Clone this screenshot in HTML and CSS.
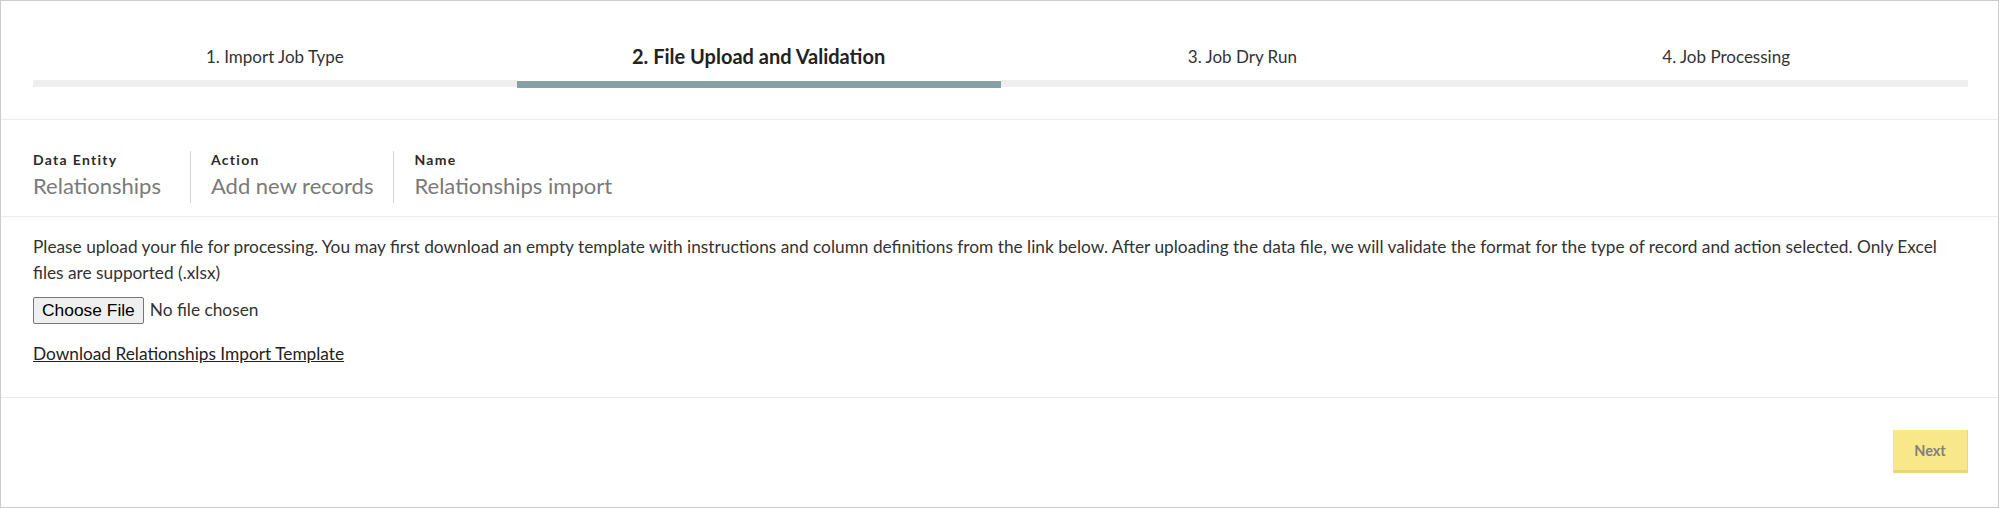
FILE: index.html
```html
<!DOCTYPE html>
<html lang="en">
<head>
<meta charset="utf-8">
<title>Import Wizard</title>
<link rel="stylesheet" href="styles.css">
</head>
<body>
<div class="wizard">
  <div class="steps">
    <div class="step">
      <div class="step-label">1. Import Job Type</div>
      <div class="step-bar"></div>
    </div>
    <div class="step active">
      <div class="step-label">2. File Upload and Validation</div>
      <div class="step-bar"></div>
    </div>
    <div class="step">
      <div class="step-label">3. Job Dry Run</div>
      <div class="step-bar"></div>
    </div>
    <div class="step">
      <div class="step-label">4. Job Processing</div>
      <div class="step-bar"></div>
    </div>
  </div>

  <div class="meta">
    <div class="meta-item first">
      <div class="meta-label">Data Entity</div>
      <div class="meta-value">Relationships</div>
    </div>
    <div class="meta-item">
      <div class="meta-label">Action</div>
      <div class="meta-value">Add new records</div>
    </div>
    <div class="meta-item last">
      <div class="meta-label">Name</div>
      <div class="meta-value">Relationships import</div>
    </div>
  </div>

  <div class="upload">
    <p class="intro">Please upload your file for processing. You may first download an empty template with instructions and column definitions from the link below. After uploading the data file, we will validate the format for the type of record and action selected. Only Excel files are supported (.xlsx)</p>
    <div class="file-row"><input type="file" class="file-input" accept=".xlsx"></div>
    <div class="link-row"><a href="#" class="template-link">Download Relationships Import Template</a></div>
  </div>

  <div class="footer">
    <button class="next-btn" type="button">Next</button>
  </div>
</div>
</body>
</html>
```

FILE: styles.css
```css
* {
  box-sizing: border-box;
}

html, body {
  margin: 0;
  padding: 0;
  background: #ffffff;
}

.wizard {
  height: 508px;
  border: 1px solid #cccccc;
  font-family: "Lato", "Liberation Sans", Arial, sans-serif;
  color: #333333;
  display: flex;
  flex-direction: column;
}

/* Steps header */
.steps {
  display: flex;
  padding: 43px 30px 32px 32px;
  border-bottom: 1px solid #ebebeb;
}

.step {
  flex: 1 1 0;
  display: flex;
  flex-direction: column;
}

.step-label {
  height: 24px;
  display: flex;
  align-items: center;
  justify-content: center;
  font-size: 17px;
  color: #333333;
  white-space: nowrap;
}

.step.active .step-label {
  font-size: 20px;
  font-weight: 700;
  color: #222222;
}

.step-bar {
  margin-top: 12px;
  height: 7px;
  background: #eeeeee;
}

.step.active .step-bar {
  background: #87a0a6;
  transform: translateY(1px);
}

/* Meta */
.meta {
  display: flex;
  padding: 31px 32px 13px 32px;
  border-bottom: 1px solid #ebebeb;
}

.meta-item {
  padding: 0 20px 3px 20px;
  border-left: 1px solid #d4d4d4;
}

.meta-item.first {
  padding-left: 0;
  padding-right: 29px;
  border-left: none;
}

.meta-label {
  font-size: 14px;
  line-height: 18px;
  font-weight: 700;
  letter-spacing: 1.3px;
  color: #2b2b2b;
}

.meta-value {
  margin-top: 3px;
  font-size: 22px;
  line-height: 28px;
  color: #7a7a7a;
}

/* Upload section */
.upload {
  padding: 17px 30px 33px 32px;
  border-bottom: 1px solid #ebebeb;
}

.intro {
  margin: 0;
  font-size: 17.3px;
  line-height: 26px;
  color: #333333;
}

.file-row {
  margin-top: 11px;
  display: flex;
}

.file-input {
  font-family: "Lato", "Liberation Sans", Arial, sans-serif;
  font-size: 17.3px;
  color: #333333;
}

.file-input::file-selector-button {
  font-family: "Liberation Sans", Arial, sans-serif;
  font-size: 17.4px;
  height: 27px;
  padding: 0 8px;
  margin-right: 6px;
  color: #000000;
  background: #efefef;
  border: 1px solid #767676;
  border-radius: 2px;
}

.link-row {
  margin-top: 20px;
  line-height: 20px;
}

.template-link {
  font-size: 17.3px;
  color: #222222;
  text-decoration: underline;
}

/* Footer */
.footer {
  flex: 1;
  display: flex;
  justify-content: flex-end;
  align-items: flex-start;
  padding: 32px 30px 0 32px;
}

.next-btn {
  width: 75px;
  height: 43px;
  background: #f9e88a;
  border: none;
  border-right: 1px solid #e9d682;
  border-bottom: 3px solid #ead57f;
  font-family: "Lato", "Liberation Sans", Arial, sans-serif;
  font-size: 14.5px;
  font-weight: 700;
  color: #808080;
  padding: 0;
}
```
